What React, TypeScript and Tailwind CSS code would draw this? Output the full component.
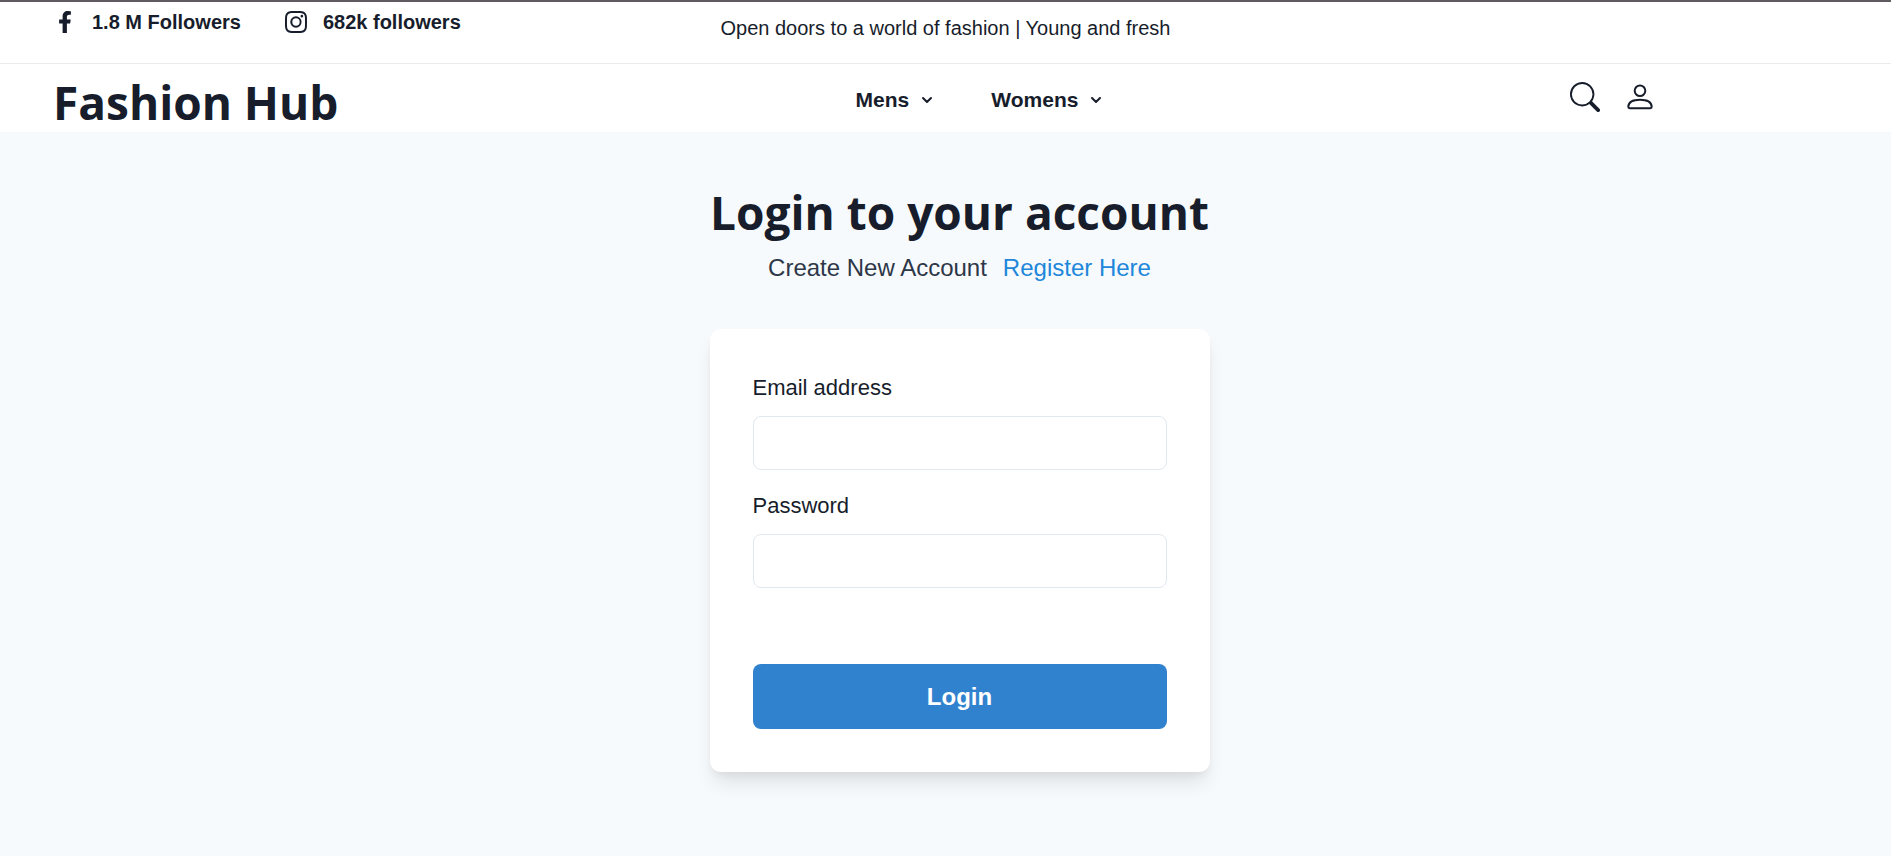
import React from "react";
import { FaFacebookF } from "react-icons/fa";
import { BsInstagram, BsSearch } from "react-icons/bs";
import { FiChevronDown } from "react-icons/fi";

const menus = ["Mens", "Womens"];

const fields = [
  { id: "email", label: "Email address", type: "email" },
  { id: "password", label: "Password", type: "password" },
];

function PersonIcon() {
  return (
    <svg
      width="26"
      height="26"
      viewBox="0 0 26 26"
      fill="none"
      stroke="currentColor"
      strokeWidth="2"
      strokeLinejoin="round"
      aria-hidden="true"
    >
      <circle cx="13" cy="6.8" r="5.3" />
      <path d="M2.6 24.2Q1.3 24.2 1.3 22.8C1.5 18.4 5.6 15.8 13 15.8S24.5 18.4 24.7 22.8Q24.7 24.2 23.4 24.2Z" />
    </svg>
  );
}

function TopBar() {
  return (
    <div className="grid h-[61px] grid-cols-[1fr_auto_1fr] items-start px-[54px]">
      <div className="flex items-center gap-11 pt-1 text-[20px] leading-8 font-bold">
        <a href="#facebook" className="flex items-center gap-4">
          <FaFacebookF size={22} />
          1.8 M Followers
        </a>
        <a href="#instagram" className="flex items-center gap-4">
          <BsInstagram size={22} />
          682k followers
        </a>
      </div>
      <p className="pt-[10px] text-[20px] leading-8">
        Open doors to a world of fashion | Young and fresh
      </p>
    </div>
  );
}

function NavBar() {
  return (
    <nav className="grid h-[69px] grid-cols-[1fr_auto_1fr] items-center border-t border-[#ebebeb] pl-[53px]">
      <a
        href="#home"
        className="pt-2 font-['Open_Sans','Noto_Sans',sans-serif] text-[46px] leading-[56px] font-bold"
      >
        Fashion Hub
      </a>
      <div className="flex gap-14 pt-1 pl-4">
        {menus.map((menu) => (
          <button key={menu} className="flex items-center gap-[10px] text-[21px] leading-8 font-bold">
            {menu}
            <FiChevronDown size={16} strokeWidth={3} />
          </button>
        ))}
      </div>
      <div className="flex items-center justify-end gap-[27px] pr-[238px] pb-[2px]">
        <button aria-label="Search">
          <BsSearch size={30} />
        </button>
        <button aria-label="Account">
          <PersonIcon />
        </button>
      </div>
    </nav>
  );
}

export default function App() {
  return (
    <div className="flex min-h-screen flex-col border-t-2 border-[#5f5b60] bg-[#f7fafc] font-['Liberation_Sans',Arial,sans-serif] text-[#171d2b]">
      <header className="bg-white">
        <TopBar />
        <NavBar />
      </header>
      <main className="flex flex-col items-center pt-12 pb-16 pl-7">
        <h1 className="text-center font-['Open_Sans','Noto_Sans',sans-serif] text-[46px] leading-[65px] font-bold">
          Login to your account
        </h1>
        <p className="mt-[5px] flex gap-4 text-[24px] leading-9 text-[#2d3748]">
          Create New Account
          <a href="#register" className="text-[#2087db]">
            Register Here
          </a>
        </p>
        <form className="mt-[43px] flex w-[500px] max-w-full flex-col rounded-[11px] bg-white p-[43px] shadow-[0_14px_20px_-4px_rgba(0,0,0,0.1),0_5px_8px_-3px_rgba(0,0,0,0.06)]">
          <div className="flex flex-col gap-5">
            {fields.map((field) => (
              <div key={field.id} className="flex flex-col gap-3">
                <label htmlFor={field.id} className="text-[22px] leading-8">
                  {field.label}
                </label>
                <input
                  id={field.id}
                  type={field.type}
                  className="h-[54px] w-full rounded-lg border border-[#e2e8f0] px-5 text-[22px]"
                />
              </div>
            ))}
          </div>
          <button
            type="button"
            className="mt-[76px] h-[65px] rounded-lg bg-[#3182ce] text-[24px] font-bold text-white"
          >
            Login
          </button>
        </form>
      </main>
    </div>
  );
}
